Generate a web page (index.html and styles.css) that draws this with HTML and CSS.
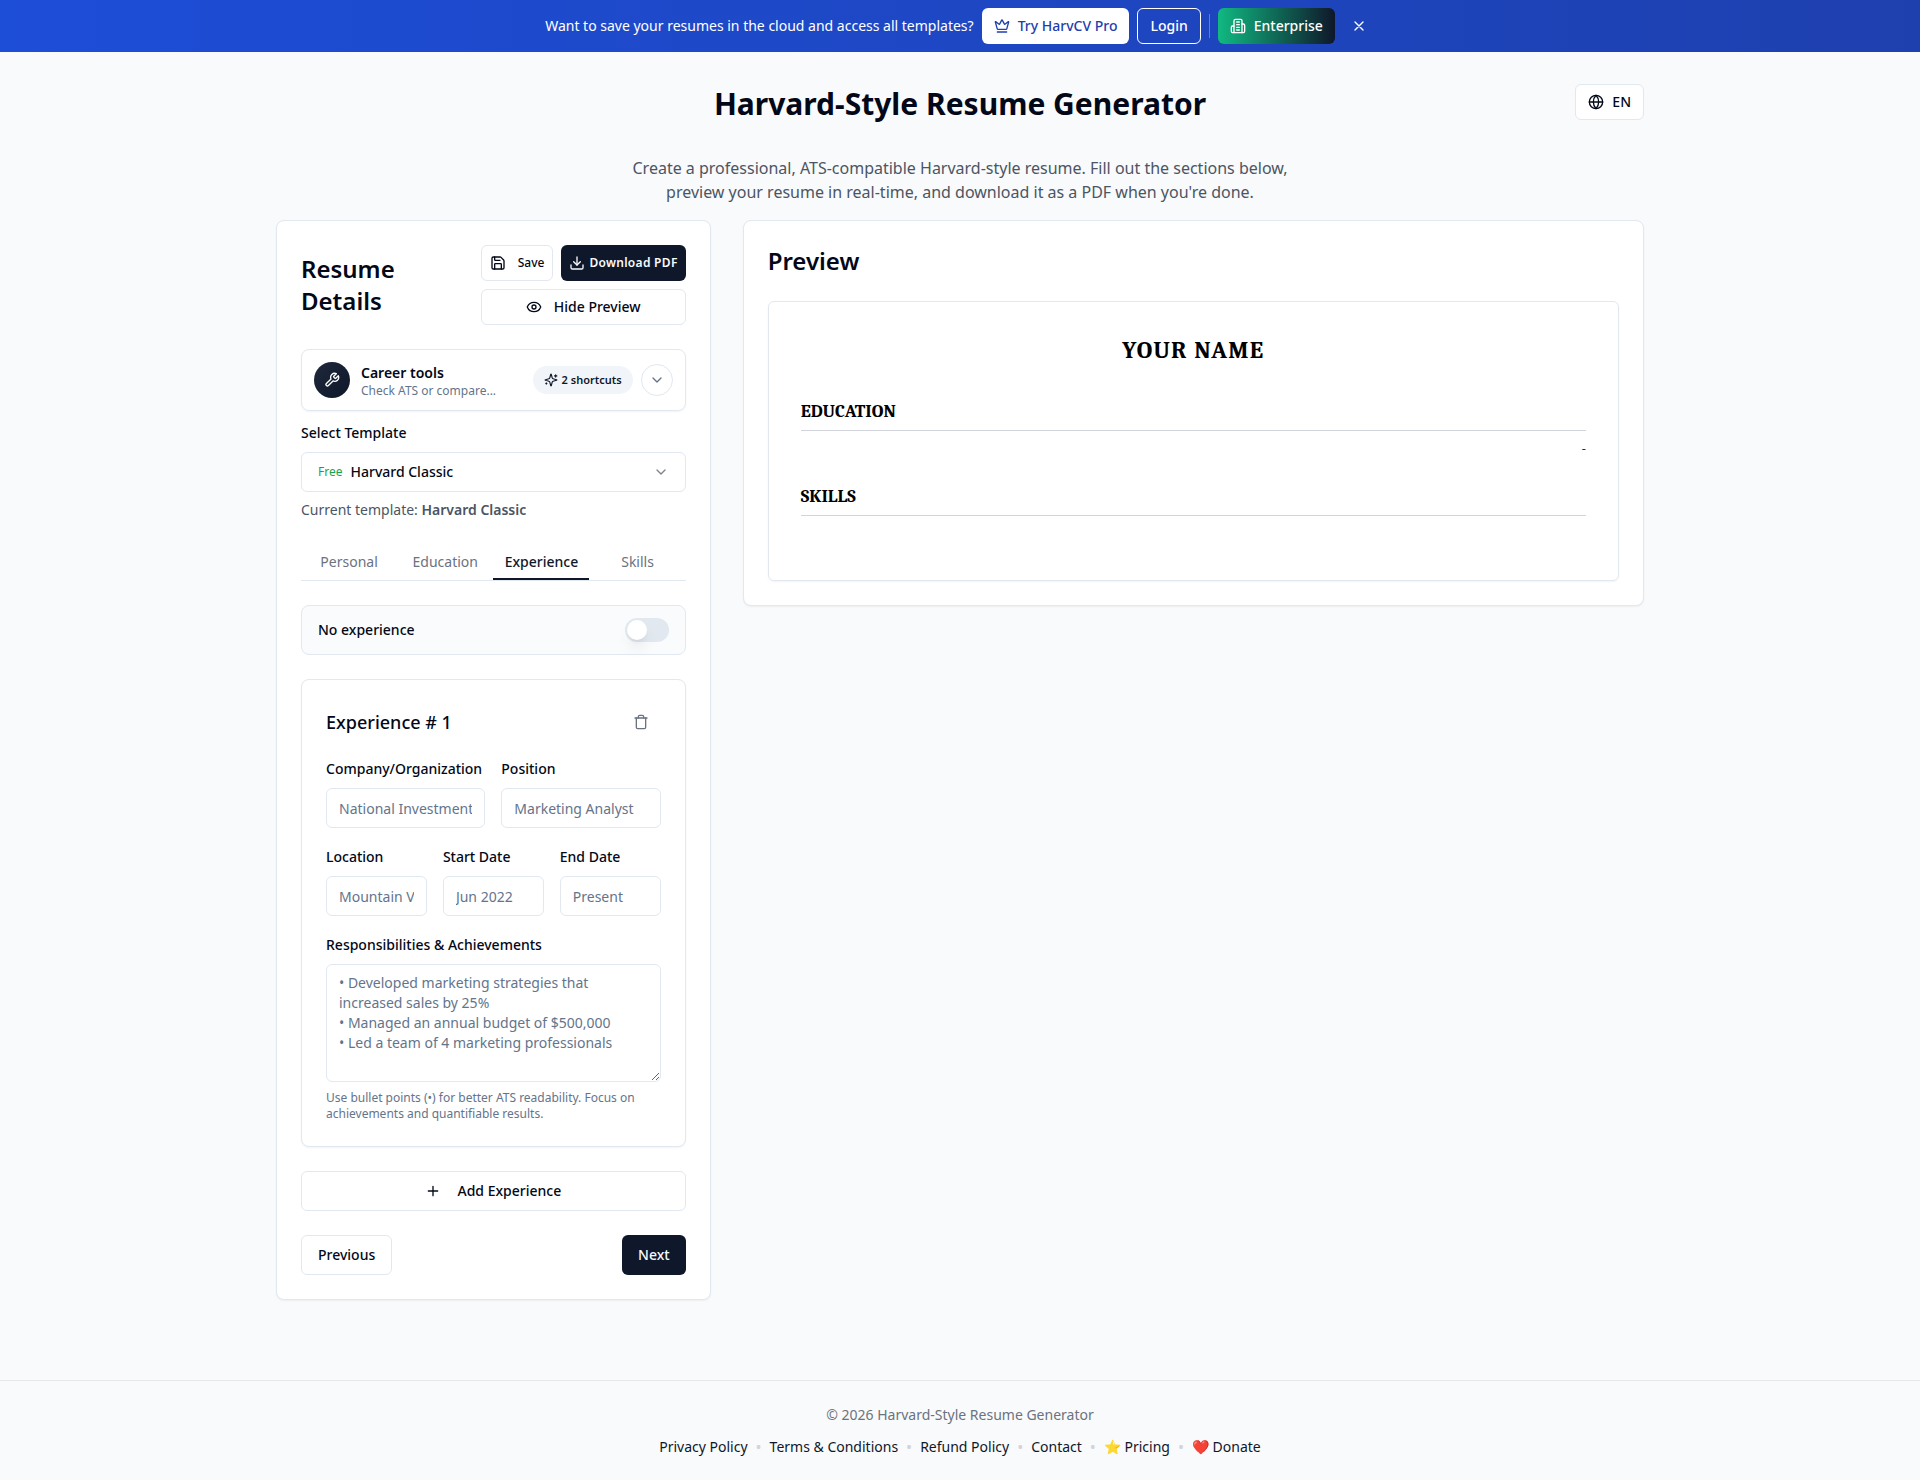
FILE: index.html
```html
<!DOCTYPE html>
<html lang="en">
<head>
  <meta charset="UTF-8" />
  <meta name="viewport" content="width=device-width, initial-scale=1.0" />
  <title>Harvard-Style Resume Generator</title>
  <link rel="stylesheet" href="styles.css">
</head>
<body>
<!-- Promo banner -->
<div class="banner">
  <span class="banner-text">Want to save your resumes in the cloud and access all templates?</span>
  <button class="btn btn-small btn-pro">
    <svg class="icon" viewBox="0 0 24 24"><path d="M11.562 3.266a.5.5 0 0 1 .876 0L15.39 8.87a1 1 0 0 0 1.516.294L21.183 5.5a.5.5 0 0 1 .798.519l-2.834 10.246a1 1 0 0 1-.956.734H5.81a1 1 0 0 1-.957-.734L2.02 6.02a.5.5 0 0 1 .798-.519l4.276 3.664a1 1 0 0 0 1.516-.294z"/><path d="M5 21h14"/></svg>
    Try HarvCV Pro
  </button>
  <button class="btn btn-small btn-login">Login</button>
  <span class="banner-divider"></span>
  <button class="btn btn-small btn-enterprise">
    <svg class="icon" viewBox="0 0 24 24"><path d="M6 22V4a2 2 0 0 1 2-2h8a2 2 0 0 1 2 2v18Z"/><path d="M6 12H4a2 2 0 0 0-2 2v6a2 2 0 0 0 2 2h2"/><path d="M18 9h2a2 2 0 0 1 2 2v9a2 2 0 0 1-2 2h-2"/><path d="M10 6h4M10 10h4M10 14h4M10 18h4"/></svg>
    Enterprise
  </button>
  <button class="banner-close" aria-label="Close">
    <svg class="icon" viewBox="0 0 24 24"><path d="M18 6 6 18M6 6l12 12"/></svg>
  </button>
</div>

<main class="container">
  <header class="page-header">
    <h1>Harvard-Style Resume Generator</h1>
    <button class="btn btn-small btn-outline btn-lang">
      <svg class="icon" viewBox="0 0 24 24"><circle cx="12" cy="12" r="10"/><path d="M12 2a14.5 14.5 0 0 0 0 20 14.5 14.5 0 0 0 0-20"/><path d="M2 12h20"/></svg>
      EN
    </button>
  </header>
  <p class="intro">Create a professional, ATS-compatible Harvard-style resume. Fill out the sections below, preview your resume in real-time, and download it as a PDF when you're done.</p>

  <div class="columns">
    <section class="card details">
      <div class="details-header">
        <h2>Resume Details</h2>
        <div class="actions">
          <button class="btn btn-outline btn-save">
            <svg class="icon" viewBox="0 0 24 24"><path d="M15.2 3a2 2 0 0 1 1.4.6l3.8 3.8a2 2 0 0 1 .6 1.4V19a2 2 0 0 1-2 2H5a2 2 0 0 1-2-2V5a2 2 0 0 1 2-2z"/><path d="M17 21v-7a1 1 0 0 0-1-1H8a1 1 0 0 0-1 1v7"/><path d="M7 3v4a1 1 0 0 0 1 1h7"/></svg>
            Save
          </button>
          <button class="btn btn-dark btn-download">
            <svg class="icon" viewBox="0 0 24 24"><path d="M21 15v4a2 2 0 0 1-2 2H5a2 2 0 0 1-2-2v-4"/><path d="m7 10 5 5 5-5"/><path d="M12 15V3"/></svg>
            Download PDF
          </button>
          <button class="btn btn-outline btn-hide">
            <svg class="icon" viewBox="0 0 24 24"><path d="M2.062 12.348a1 1 0 0 1 0-.696 10.75 10.75 0 0 1 19.876 0 1 1 0 0 1 0 .696 10.75 10.75 0 0 1-19.876 0"/><circle cx="12" cy="12" r="3"/></svg>
            Hide Preview
          </button>
        </div>
      </div>

      <div class="tools">
        <span class="tools-icon">
          <svg class="icon" viewBox="0 0 24 24"><path d="M14.7 6.3a1 1 0 0 0 0 1.4l1.6 1.6a1 1 0 0 0 1.4 0l3.77-3.77a6 6 0 0 1-7.94 7.94l-6.91 6.91a2.12 2.12 0 0 1-3-3l6.91-6.91a6 6 0 0 1 7.94-7.94l-3.76 3.76z"/></svg>
        </span>
        <div class="tools-text">
          <div class="tools-title">Career tools</div>
          <div class="tools-sub">Check ATS or compare...</div>
        </div>
        <span class="tools-badge">
          <svg class="icon" viewBox="0 0 24 24"><path d="M9.937 15.5A2 2 0 0 0 8.5 14.063l-6.135-1.582a.5.5 0 0 1 0-.962L8.5 9.936A2 2 0 0 0 9.937 8.5l1.582-6.135a.5.5 0 0 1 .963 0L14.063 8.5A2 2 0 0 0 15.5 9.937l6.135 1.581a.5.5 0 0 1 0 .964L15.5 14.063a2 2 0 0 0-1.437 1.437l-1.582 6.135a.5.5 0 0 1-.963 0z"/><path d="M20 3v4M22 5h-4M4 17v2M5 18H3"/></svg>
          2 shortcuts
        </span>
        <button class="tools-toggle" aria-label="Expand career tools">
          <svg class="icon" viewBox="0 0 24 24"><path d="m6 9 6 6 6-6"/></svg>
        </button>
      </div>

      <div class="field template">
        <div class="field-label"><label for="template">Select Template</label></div>
        <div class="select-box">
          <span class="free">Free</span>
          <select id="template">
            <option>Harvard Classic</option>
          </select>
          <svg class="icon" viewBox="0 0 24 24"><path d="m6 9 6 6 6-6"/></svg>
        </div>
        <p class="current">Current template: <strong>Harvard Classic</strong></p>
      </div>

      <div class="tabs" role="tablist">
        <button class="tab" role="tab">Personal</button>
        <button class="tab" role="tab">Education</button>
        <button class="tab active" role="tab" aria-selected="true">Experience</button>
        <button class="tab" role="tab">Skills</button>
      </div>

      <div class="panel">
        <div class="no-experience">
          <label for="no-exp">No experience</label>
          <input type="checkbox" role="switch" class="switch" id="no-exp">
        </div>

        <div class="card experience">
          <div class="experience-header">
            <h3>Experience # 1</h3>
            <button class="btn-trash" aria-label="Delete experience">
              <svg class="icon" viewBox="0 0 24 24"><path d="M3 6h18"/><path d="M19 6v14a2 2 0 0 1-2 2H7a2 2 0 0 1-2-2V6"/><path d="M8 6V4a2 2 0 0 1 2-2h4a2 2 0 0 1 2 2v2"/></svg>
            </button>
          </div>
          <div class="row two">
            <div class="field">
              <div class="field-label"><label for="company">Company/Organization</label></div>
              <input type="text" class="input" id="company" placeholder="National Investment Bank">
            </div>
            <div class="field">
              <div class="field-label"><label for="position">Position</label></div>
              <input type="text" class="input" id="position" placeholder="Marketing Analyst">
            </div>
          </div>
          <div class="row three">
            <div class="field">
              <div class="field-label"><label for="location">Location</label></div>
              <input type="text" class="input" id="location" placeholder="Mountain View, CA">
            </div>
            <div class="field">
              <div class="field-label"><label for="start">Start Date</label></div>
              <input type="text" class="input" id="start" placeholder="Jun 2022">
            </div>
            <div class="field">
              <div class="field-label"><label for="end">End Date</label></div>
              <input type="text" class="input" id="end" placeholder="Present">
            </div>
          </div>
          <div class="field">
            <div class="field-label"><label for="resp">Responsibilities &amp; Achievements</label></div>
            <textarea class="input" id="resp" rows="5" placeholder="• Developed marketing strategies that increased sales by 25%&#10;• Managed an annual budget of $500,000&#10;• Led a team of 4 marketing professionals"></textarea>
            <p class="hint">Use bullet points (•) for better ATS readability. Focus on achievements and quantifiable results.</p>
          </div>
        </div>

        <button class="btn btn-outline btn-add">
          <svg class="icon" viewBox="0 0 24 24"><path d="M5 12h14M12 5v14"/></svg>
          Add Experience
        </button>

        <div class="nav-buttons">
          <button class="btn btn-outline">Previous</button>
          <button class="btn btn-dark">Next</button>
        </div>
      </div>
    </section>

    <section class="card preview">
      <h2>Preview</h2>
      <div class="resume">
        <h1 class="resume-name">YOUR NAME</h1>
        <div class="resume-section">
          <h2>EDUCATION</h2>
          <div class="resume-dates">-</div>
        </div>
        <div class="resume-section">
          <h2>SKILLS</h2>
        </div>
      </div>
    </section>
  </div>
</main>

<footer class="footer">
  <p>© 2026 Harvard-Style Resume Generator</p>
  <nav class="footer-links">
    <a href="#">Privacy Policy</a>
    <span>•</span>
    <a href="#">Terms &amp; Conditions</a>
    <span>•</span>
    <a href="#">Refund Policy</a>
    <span>•</span>
    <a href="#">Contact</a>
    <span>•</span>
    <a href="#">⭐ Pricing</a>
    <span>•</span>
    <a href="#">❤️ Donate</a>
  </nav>
</footer>
</body>
</html>
```

FILE: styles.css
```css
* {
  box-sizing: border-box;
  margin: 0;
  padding: 0;
}
body {
  font-family: "Noto Sans", sans-serif;
  font-size: 16px;
  line-height: 24px;
  color: #020817;
  background: #f9fafb;
}
button, input, select, textarea {
  font: inherit;
  color: inherit;
}
button {
  cursor: pointer;
  border: none;
  background: none;
}
.icon {
  width: 16px;
  height: 16px;
  flex-shrink: 0;
  fill: none;
  stroke: currentColor;
  stroke-width: 2;
  stroke-linecap: round;
  stroke-linejoin: round;
}

/* buttons */
.btn {
  display: inline-flex;
  align-items: center;
  justify-content: center;
  gap: 8px;
  height: 40px;
  padding: 0 16px;
  border-radius: 6px;
  font-size: 14px;
  line-height: 20px;
  font-weight: 500;
  white-space: nowrap;
}
.btn-small {
  height: 36px;
  padding: 0 12px;
}
.btn-outline {
  background: white;
  border: 1px solid #e2e8f0;
}
.btn-dark {
  background: #0f172a;
  color: #f8fafc;
}

/* banner */
.banner {
  display: flex;
  align-items: center;
  justify-content: center;
  gap: 8px;
  padding: 8px 16px;
  background: linear-gradient(to right, #1d4ed8, #1e40af);
  color: white;
}
.banner-text {
  font-size: 14px;
  line-height: 20px;
}
.btn-pro {
  background: white;
  color: #1e40af;
}
.btn-login {
  border: 1px solid white;
}
.banner-divider {
  width: 1px;
  height: 24px;
  background: rgba(255, 255, 255, 0.3);
}
.btn-enterprise {
  background: linear-gradient(to right, #10b981, #0f172a);
}
.banner-close {
  display: flex;
  padding: 8px;
}

/* page */
.container {
  max-width: 1400px;
  margin: 0 auto;
  padding: 32px 16px;
}
.page-header {
  display: grid;
  grid-template-columns: 1fr auto 1fr;
  align-items: start;
  margin-bottom: 32px;
}
.page-header h1 {
  grid-column: 2;
  font-size: 30px;
  line-height: 40px;
  font-weight: 700;
}
.btn-lang {
  justify-self: end;
}
.intro {
  max-width: 672px;
  margin: 0 auto 16px;
  text-align: center;
  color: #4b5563;
}
.columns {
  display: grid;
  grid-template-columns: repeat(3, 1fr);
  gap: 32px;
  align-items: start;
}
.card {
  background: white;
  border: 1px solid #e2e8f0;
  border-radius: 8px;
  padding: 24px;
  box-shadow: 0 1px 2px rgba(0, 0, 0, 0.05);
}
.card h2 {
  font-size: 24px;
  line-height: 32px;
  font-weight: 600;
}

/* left column */
.details-header {
  display: flex;
  align-items: center;
  justify-content: space-between;
  gap: 16px;
  margin-bottom: 24px;
}
.actions {
  display: grid;
  grid-template-columns: auto auto;
  gap: 8px;
}
.actions .btn {
  height: 36px;
  padding: 0 8px;
  gap: 12px;
}
.actions .btn-save {
  font-size: 12px;
}
.actions .btn-download {
  font-size: 12px;
  font-weight: 600;
  letter-spacing: 0.025em;
  gap: 4px;
}
.btn-hide {
  grid-column: span 2;
}
.tools {
  display: flex;
  align-items: center;
  gap: 8px;
  padding: 12px;
  border: 1px solid #e2e8f0;
  border-radius: 8px;
  box-shadow: 0 1px 2px rgba(0, 0, 0, 0.05);
}
.tools-icon {
  display: flex;
  align-items: center;
  justify-content: center;
  width: 36px;
  height: 36px;
  border-radius: 50%;
  background: linear-gradient(135deg, #1e293b, #0f172a);
  color: white;
}
.tools-text {
  flex: 1;
  padding-left: 3px;
}
.tools-title {
  font-size: 14px;
  line-height: 20px;
  font-weight: 600;
}
.tools-sub {
  font-size: 12px;
  line-height: 15px;
  color: #64748b;
}
.tools-badge {
  display: flex;
  align-items: center;
  gap: 4px;
  height: 28px;
  padding: 0 11px;
  border-radius: 14px;
  background: #f1f5f9;
  font-size: 11px;
  font-weight: 600;
  color: #0f172a;
}
.tools-badge .icon {
  width: 14px;
  height: 14px;
}
.tools-toggle {
  display: flex;
  align-items: center;
  justify-content: center;
  width: 32px;
  height: 32px;
  border: 1px solid #e2e8f0;
  border-radius: 50%;
  color: #64748b;
}
.template {
  margin-top: 9px;
}
.field-label {
  margin-bottom: 8px;
}
label {
  font-size: 14px;
  line-height: 14px;
  font-weight: 500;
}
.select-box {
  display: flex;
  align-items: center;
  gap: 8px;
  height: 40px;
  padding: 0 16px;
  border: 1px solid #e2e8f0;
  border-radius: 6px;
  font-size: 14px;
}
.select-box .icon {
  opacity: 0.5;
}
.free {
  font-size: 12px;
  color: #16a34a;
}
.select-box select {
  flex: 1;
  appearance: none;
  border: none;
  background: none;
  font-weight: 500;
}
.current {
  margin-top: 8px;
  font-size: 14px;
  line-height: 20px;
  color: #4b5563;
}
.current strong {
  font-weight: 600;
}
.tabs {
  display: grid;
  grid-template-columns: repeat(4, 1fr);
  margin: 24px 0;
  border-bottom: 1px solid #e2e8f0;
}
.tab {
  height: 36px;
  font-size: 14px;
  line-height: 20px;
  color: #6b7280;
}
.tab.active {
  color: #0f172a;
  font-weight: 500;
  box-shadow: inset 0 -2px #0f172a;
}
.panel {
  display: flex;
  flex-direction: column;
  gap: 24px;
}
.no-experience {
  display: flex;
  align-items: center;
  justify-content: space-between;
  padding: 12px 16px;
  border: 1px solid #e2e8f0;
  border-radius: 8px;
  background: #fafbfd;
}
.switch {
  appearance: none;
  display: flex;
  width: 44px;
  height: 24px;
  padding: 2px;
  border-radius: 12px;
  background: #e2e8f0;
  cursor: pointer;
}
.switch::before {
  content: "";
  width: 20px;
  height: 20px;
  border-radius: 50%;
  background: white;
  box-shadow: 0 10px 15px -3px rgba(0, 0, 0, 0.1), 0 4px 6px -4px rgba(0, 0, 0, 0.1);
}
.switch:checked {
  background: #0f172a;
}
.switch:checked::before {
  margin-left: 20px;
}
.experience {
  display: flex;
  flex-direction: column;
  gap: 16px;
}
.experience-header {
  display: flex;
  align-items: center;
  justify-content: space-between;
}
.experience-header h3 {
  font-size: 18px;
  line-height: 28px;
  font-weight: 500;
}
.btn-trash {
  display: flex;
  align-items: center;
  height: 36px;
  padding: 0 12px;
  color: #6b7280;
}
.row {
  display: grid;
  gap: 16px;
}
.two {
  grid-template-columns: repeat(2, minmax(0, 1fr));
}
.three {
  grid-template-columns: repeat(3, minmax(0, 1fr));
}
.input {
  display: block;
  width: 100%;
  padding: 8px 12px;
  border: 1px solid #e2e8f0;
  border-radius: 6px;
  background: white;
  font-size: 14px;
  line-height: 20px;
}
input.input {
  height: 40px;
}
.input::placeholder {
  color: #64748b;
}
.hint {
  margin-top: 8px;
  font-size: 12px;
  line-height: 16px;
  color: #64748b;
}
.btn-add {
  gap: 16px;
}
.nav-buttons {
  display: flex;
  justify-content: space-between;
}

/* preview */
.preview {
  grid-column: span 2;
}
.resume {
  margin-top: 24px;
  padding: 32px;
  border: 1px solid #e2e8f0;
  border-radius: 6px;
  box-shadow: 0 1px 2px rgba(0, 0, 0, 0.05);
  font-family: Cambria, Georgia, serif;
  color: black;
}
.resume-name {
  margin-bottom: 32px;
  text-align: center;
  font-size: 24px;
  line-height: 32px;
  font-weight: 700;
  letter-spacing: 0.05em;
}
.resume-section {
  display: flow-root;
  margin-bottom: 24px;
}
.resume-section h2 {
  margin-bottom: 8px;
  padding-bottom: 4px;
  border-bottom: 1px solid #d1d5db;
  font-size: 18px;
  line-height: 28px;
  font-weight: 700;
}
.resume-dates {
  text-align: right;
  font-size: 14px;
  line-height: 20px;
}

/* footer */
.footer {
  margin-top: 48px;
  padding: 24px 16px;
  border-top: 1px solid #e5e7eb;
  text-align: center;
  font-size: 14px;
  line-height: 20px;
  color: #6b7280;
}
.footer-links {
  display: flex;
  justify-content: center;
  gap: 8px;
  margin-top: 12px;
}
.footer-links a {
  color: #0f172a;
  text-decoration: none;
}
.footer-links span {
  font-size: 16px;
  color: #d1d5db;
}
```
